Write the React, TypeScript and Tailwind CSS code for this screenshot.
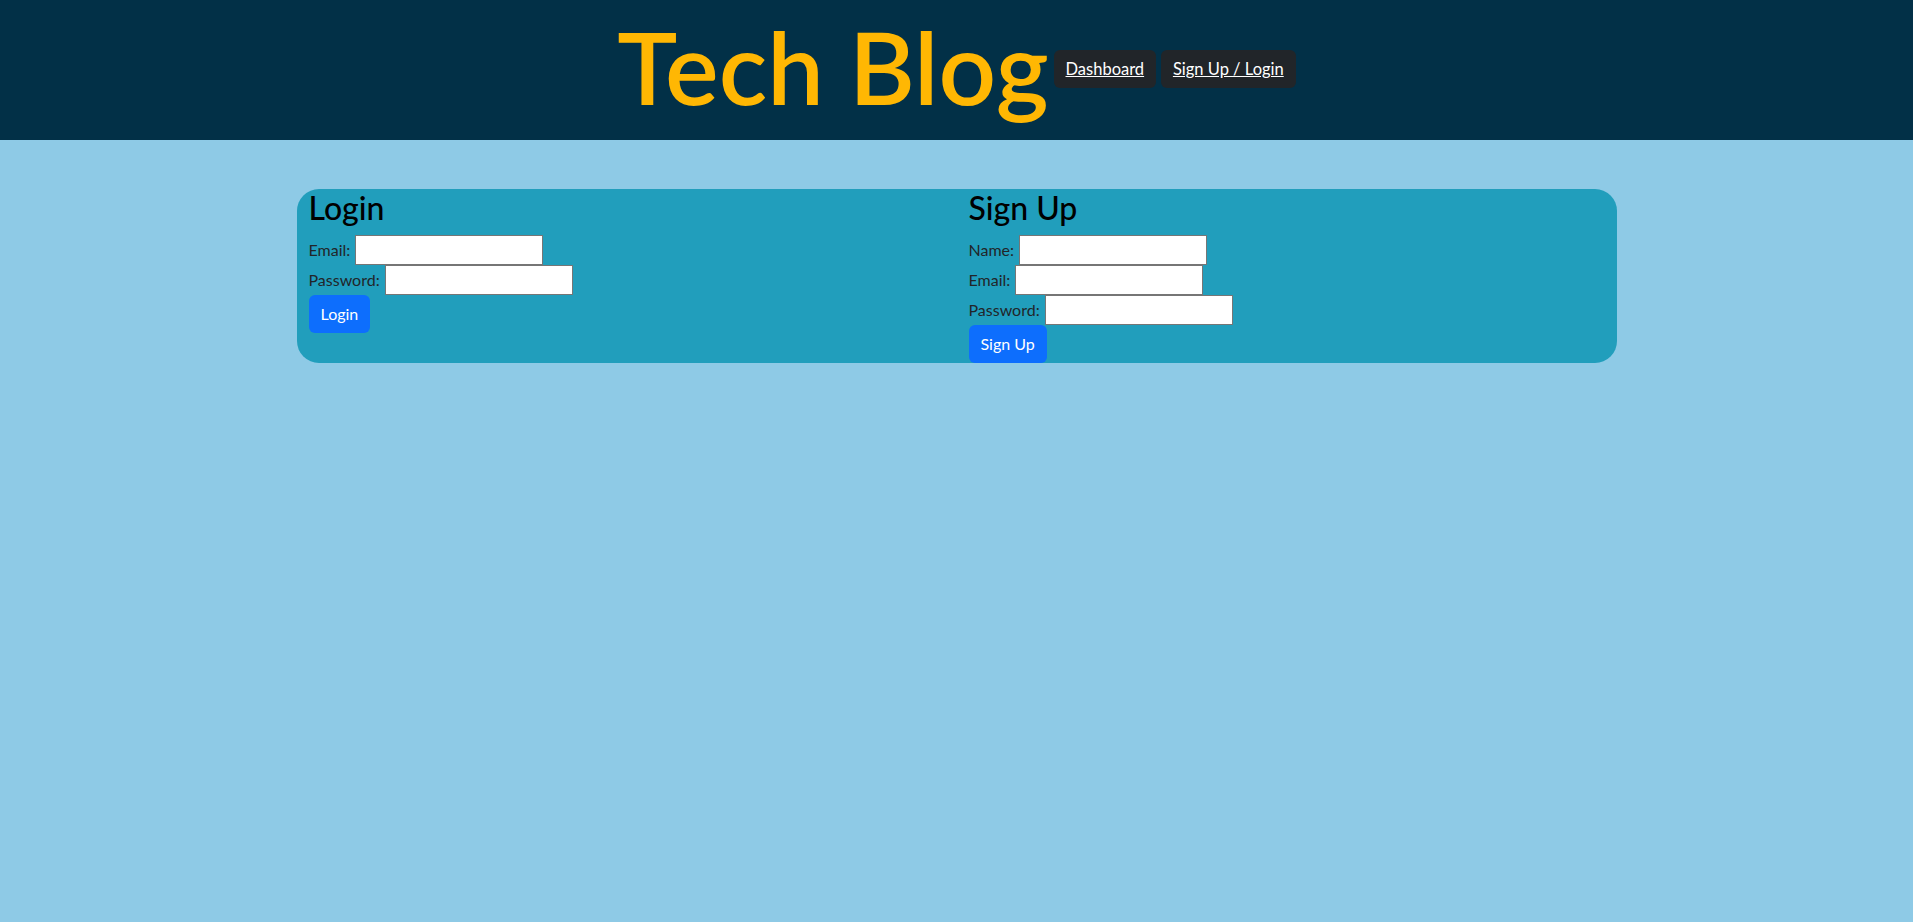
const font = { fontFamily: "Lato, 'Noto Sans', sans-serif" };

const Field = ({ label, type = "text" }: { label: string; type?: string }) => (
  <div className="flex items-center gap-[5px] h-[30px] text-base text-[#212529]">
    <label>{label}</label>
    <input type={type} className="h-[30px] w-[188px] border border-[#767676] bg-white px-1 outline-none" />
  </div>
);

const Header = () => (
  <header className="h-[140px] bg-[#023047] flex justify-center">
    <div className="flex items-start gap-[5px]">
      <h1 className="mt-[16px] text-[101px] leading-none font-semibold text-[#ffb703] whitespace-nowrap">Tech Blog</h1>
      <nav className="mt-[50px] flex gap-[5px]">
        <a href="#" className="h-[38px] w-[102px] rounded-md bg-[#212529] text-white underline text-[16.5px] flex items-center justify-center">
          Dashboard
        </a>
        <a href="#" className="h-[38px] w-[135px] rounded-md bg-[#212529] text-white underline text-[16.5px] flex items-center justify-center whitespace-nowrap">
          Sign Up / Login
        </a>
      </nav>
    </div>
  </header>
);

export default function App() {
  return (
    <div className="min-h-screen bg-[#8ecae6]" style={font}>
      <Header />
      <main className="mx-auto mt-[49px] w-[1320px] rounded-[22px] bg-[#219ebc] flex">
        <section className="w-1/2 px-3">
          <h2 className="text-[32px] leading-[1.2] mb-2 font-medium text-black">Login</h2>
          <Field label="Email:" type="email" />
          <Field label="Password:" type="password" />
          <button className="h-[38px] px-3 rounded-md bg-[#0d6efd] text-white text-base">Login</button>
        </section>
        <section className="w-1/2 px-3">
          <h2 className="text-[32px] leading-[1.2] mb-2 font-medium text-black">Sign Up</h2>
          <Field label="Name:" />
          <Field label="Email:" type="email" />
          <Field label="Password:" type="password" />
          <button className="h-[38px] px-3 rounded-md bg-[#0d6efd] text-white text-base">Sign Up</button>
        </section>
      </main>
    </div>
  );
}
